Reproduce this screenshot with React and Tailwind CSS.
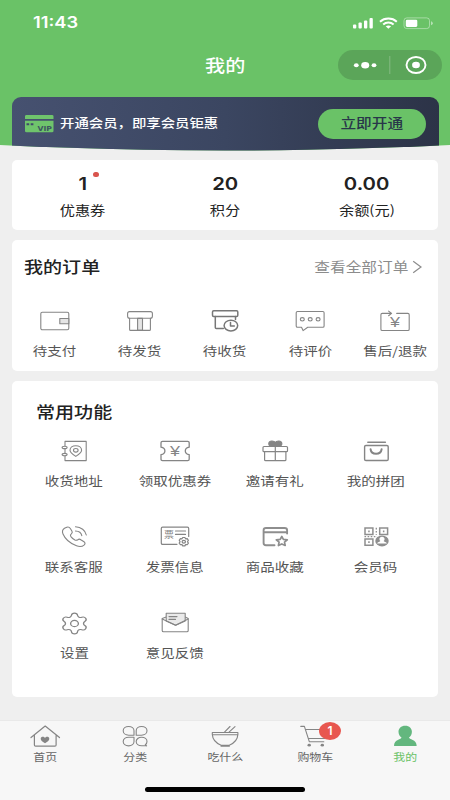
import React from "react";
import { Settings } from "lucide-react";

// Wide text: glyphs are a bit broader than they are tall
const Label = ({ children, className = "" }) => (
  <span
    className={`inline-block whitespace-nowrap scale-x-[1.17] leading-none ${className}`}
  >
    {children}
  </span>
);

// Common 36x28 canvas for all menu icons
const Icon = ({ children, color = "text-[#858585]", width = 1.1 }) => (
  <svg
    viewBox="0 0 36 28"
    className={`block h-7 w-9 shrink-0 ${color}`}
    fill="none"
    stroke="currentColor"
    strokeWidth={width}
    strokeLinecap="round"
    strokeLinejoin="round"
  >
    {children}
  </svg>
);

const Yen = ({ y = 18.8 }) => (
  <text
    x="13"
    y={y}
    fontSize="14"
    textLength="10"
    lengthAdjust="spacingAndGlyphs"
    fontFamily="Liberation Sans, sans-serif"
    fill="currentColor"
    stroke="none"
  >
    ¥
  </text>
);

const orders = [
  {
    title: "待支付",
    icon: (
      <Icon>
        <rect x="3.8" y="5.3" width="28" height="17.4" rx="1.5" />
        <path d="M31.8 11.5h-9v5.2h9z" fill="#e5e5e5" />
      </Icon>
    ),
  },
  {
    title: "待发货",
    icon: (
      <Icon>
        <path d="M15.6 11.4h4.9v12h-4.9z" fill="#e5e5e5" />
        <rect x="5.6" y="4.6" width="24.8" height="6.6" rx="2" />
        <path d="M7.6 11.2v11.2q0 1 1 1h18.8q1 0 1-1V11.2" />
      </Icon>
    ),
  },
  {
    title: "待收货",
    icon: (
      <Icon width={1.5} color="text-[#777777]">
        <rect x="5.5" y="3.8" width="25.3" height="5.6" rx="1.2" />
        <path d="M8.3 9.4v11.2q0 1 1 1h7M28.5 9.4v3.2" />
        <ellipse cx="23.9" cy="18.6" rx="6.8" ry="5.4" />
        <path d="M23.5 15.4v3.6h3.8" />
      </Icon>
    ),
  },
  {
    title: "待评价",
    icon: (
      <Icon>
        <path d="M5.5 4.5h25.3q1.3 0 1.3 1.3v13.1q0 1.3-1.3 1.3H15.7l-4.6 3.4-1.6-3.4h-4q-1.3 0-1.3-1.3V5.8q0-1.3 1.3-1.3z" />
        <ellipse cx="10.3" cy="12.3" rx="2" ry="1.7" />
        <ellipse cx="18.2" cy="12.3" rx="2" ry="1.7" />
        <ellipse cx="26.1" cy="12.3" rx="2" ry="1.7" />
      </Icon>
    ),
  },
  {
    title: "售后/退款",
    icon: (
      <Icon>
        <path d="M19.7 6.4h11.2q1.3 0 1.3 1.3v14.5q0 1.3-1.3 1.3H5.2q-1.3 0-1.3-1.3V7.7q0-1.3 1.3-1.3h9M11.6 4.1l3 2.3-3 2.3" />
        <Yen y="19.8" />
      </Icon>
    ),
  },
];

const features = [
  {
    title: "收货地址",
    icon: (
      <Icon>
        <path d="M9 9V4.4h21.2v19.2H9V19M9 12v4" />
        <ellipse cx="8.6" cy="10.4" rx="2.5" ry="1.2" />
        <ellipse cx="8.6" cy="17.6" rx="2.5" ry="1.2" />
        <path d="M19.8 19.4c-3.6-2.3-5.8-4-5.8-6.2 0-2.6 2.5-4.5 5.8-4.5s5.8 1.9 5.8 4.5c0 2.2-2.2 3.9-5.8 6.2z" />
        <ellipse cx="19.8" cy="13.3" rx="2.3" ry="1.8" />
      </Icon>
    ),
  },
  {
    title: "领取优惠券",
    icon: (
      <Icon width={1.3}>
        <path d="M5.5 4.4h25.2q1.5 0 1.5 1.3v4.5c-5.2 1-5.2 6.4 0 7.4v4.7q0 1.3-1.5 1.3H5.5q-1.5 0-1.5-1.3v-4.7c5.2-1 5.2-6.4 0-7.4V5.7q0-1.3 1.5-1.3z" />
        <Yen />
      </Icon>
    ),
  },
  {
    title: "邀请有礼",
    icon: (
      <Icon width={1.2}>
        <path
          d="M18.3 9.5h-4c-4-1.6-2.8-5.7.7-5.5 1.6.1 2.8.7 3.3 1.6.5-.9 1.7-1.5 3.3-1.6 3.5-.2 4.7 3.9.7 5.5z"
          fill="currentColor"
        />
        <rect x="6" y="9.5" width="24.5" height="5.2" rx="1" />
        <path d="M7.6 14.7v8q0 1 1 1h19.3q1 0 1-1v-8M18.3 9.5v14.2" />
      </Icon>
    ),
  },
  {
    title: "我的拼团",
    icon: (
      <Icon width={1.4}>
        <path d="M9.8 5.3h17.6" />
        <rect x="6.6" y="8.5" width="23.6" height="15" rx="1.3" />
        <path d="M12.6 12.3c.7 5.8 10.2 5.8 11 0" strokeWidth="2" />
      </Icon>
    ),
  },
  {
    title: "联系客服",
    icon: (
      <Icon>
        <path d="M8.5 5.3 10.8 4.2c1.5-.6 2.8.1 3.7 1.5l1.5 2.5c.6 1.1.3 1.9-.7 2.7-1.2.9-1.2 1.6-.4 2.7 1.1 1.4 2.5 2.5 4 3.3 1 .5 1.9.5 2.9-.2 1-.8 2-.8 3 0l3.2 2.1c1.3 1 1.3 2 .3 3-1.8 1.7-4.8 2.2-7.8 1C14 20.3 9 15.8 7 11 6 8.6 6.4 6.6 8.5 5.3z" />
        <path d="M19.5 3.8c5.5.2 10 3.5 10.8 8.2M19.5 8c3.4.1 5.8 1.9 6.3 4.7" />
      </Icon>
    ),
  },
  {
    title: "发票信息",
    icon: (
      <Icon width={1.2}>
        <path d="M20 21.3H5.6q-1.3 0-1.3-1.3V5.5q0-1.3 1.3-1.3h24.8q1.3 0 1.3 1.3v8" />
        <text
          x="7"
          y="15"
          fontSize="9"
          textLength="10"
          lengthAdjust="spacingAndGlyphs"
          fontFamily="Noto Sans CJK SC, sans-serif"
          fill="currentColor"
          stroke="none"
        >
          票
        </text>
        <path d="M18.5 8h10M18.5 11.4h10" />
        <path d="M25 15.8l.7-1.3h2.2l.7 1.3 1.6-.1 1.2 1.6-.9 1.4.9 1.4-1.2 1.6-1.6-.1-.7 1.3h-2.2l-.7-1.3-1.6.1-1.2-1.6.9-1.4-.9-1.4 1.2-1.6z" />
        <ellipse cx="26.8" cy="18.7" rx="1.7" ry="1.4" />
      </Icon>
    ),
  },
  {
    title: "商品收藏",
    icon: (
      <Icon width={1.9} color="text-[#8e8e8e]">
        <path d="M17.5 22.3H9q-2.4 0-2.4-2.2V7.3q0-2.3 2.4-2.3h18.5q2.6 0 2.6 2.3v1.9H6.6M30.1 9.2v1.4" />
        <path
          d="M24.8 13.5l1.6 2.9 3.9.4-2.8 2.3.7 3.4-3.4-1.6-3.4 1.6.7-3.4-2.8-2.3 3.9-.4z"
          strokeWidth="1.7"
        />
      </Icon>
    ),
  },
  {
    title: "会员码",
    icon: (
      <Icon width={1.5} color="text-[#8e8e8e]">
        <g strokeLinejoin="miter">
          <path d="M7 5.1h7.9v6.4H7zM21.7 5.1h7.9v6.4h-7.9zM7 15.9h7.9v6.4H7z" />
          <path d="M10.2 8.3h1.5M24.9 8.3h1.5M10.2 19.1h1.5" strokeLinecap="butt" strokeWidth="1.8" />
          <path
            d="M18.3 4.8v7M6.5 13.7h12.5"
            strokeDasharray="1.6 1.5"
            strokeLinecap="butt"
            strokeWidth="1.3"
          />
        </g>
        <ellipse cx="24" cy="17.9" rx="6.7" ry="5.5" fill="currentColor" stroke="none" />
        <path
          d="M24 13.7c1.6 0 2.6 1 2.6 2.3 0 .9-.4 1.5-1 2 .2.9 3 1 3.3 2.5h-9.8c.3-1.5 3.1-1.6 3.3-2.5-.6-.5-1-1.1-1-2 0-1.3 1-2.3 2.6-2.3z"
          fill="white"
          stroke="none"
        />
      </Icon>
    ),
  },
  {
    title: "设置",
    icon: (
      <span className="flex h-7 w-9 items-center justify-center">
        <Settings
          className="h-[25px] w-[31px] text-[#858585]"
          preserveAspectRatio="none"
          strokeWidth={1.05}
        />
      </span>
    ),
  },
  {
    title: "意见反馈",
    icon: (
      <Icon>
        <path d="M9.2 8 5.2 9.5v12q0 1.3 1.3 1.3h23.4q1.3 0 1.3-1.3v-12l-3-1.5" />
        <path d="M9.2 12V4.2h19V12L18.6 16.2z" fill="#eaeaea" />
        <path d="M5.2 10 18.6 16.3 31.2 10M12 7.6h8M12 10.4h6.5" />
      </Icon>
    ),
  },
];

const tabs = [
  {
    title: "首页",
    icon: (
      <Icon width={1.2}>
        <path d="M4 14.5 18.2 3 32.5 14.5M7.4 12v10q0 1.2 1.2 1.2h19.3q1.2 0 1.2-1.2V12" />
        <path
          d="M18 20.2c-3-1.7-4.3-3-4.3-4.5 0-2.2 3.3-2.6 4.3-.7 1-1.9 4.3-1.5 4.3.7 0 1.5-1.3 2.8-4.3 4.5z"
          fill="currentColor"
          stroke="none"
        />
      </Icon>
    ),
  },
  {
    title: "分类",
    icon: (
      <Icon>
        <path d="M17 12.2h-5.3c-3.2 0-5.5-1.9-5.5-4.4s2.3-4.3 5.4-4.3S17 5.3 17 7.8z" />
        <path d="M19.2 12.2h5.3c3.2 0 5.5-1.9 5.5-4.4s-2.3-4.3-5.4-4.3-5.4 1.8-5.4 4.3z" />
        <path d="M17 14.2h-5.3c-3.2 0-5.5 1.9-5.5 4.4s2.3 4.3 5.4 4.3S17 21.1 17 18.6z" />
        <path d="M28.6 22.8h-4c-3.1 0-5.4-1.9-5.4-4.3s2.3-4.3 5.4-4.3 5.4 1.9 5.4 4.3c0 1.4-.6 2.5-1.7 3.2l1.3 1.1" />
      </Icon>
    ),
  },
  {
    title: "吃什么",
    icon: (
      <Icon>
        <path d="M5.3 9.5h25.6v1.9c-.3 5.1-4.3 9-8.6 10.8v1.1h-8.2v-1.1C9.6 20.4 5.6 16.5 5.3 11.4zM5.3 11.7h25.6M17.5 9.2 23 3.5M22 9.2l6-5.5M14.1 22.2h8.2" />
      </Icon>
    ),
  },
  {
    title: "购物车",
    badge: 1,
    icon: (
      <Icon>
        <path d="M3.8 3.4h3.6l4.9 15.3h14.5M9 6.500h22l-3.5 9H11.3" />
        <ellipse cx="12.2" cy="22.2" rx="1.7" ry="1.4" fill="currentColor" stroke="none" />
        <ellipse cx="25.3" cy="22.2" rx="1.7" ry="1.4" fill="currentColor" stroke="none" />
      </Icon>
    ),
  },
  {
    title: "我的",
    active: true,
    icon: (
      <Icon color="text-[#63b77e]">
        <path
          d="M18.2 2.7c4.2 0 6.7 2.6 6.7 6.1 0 2.6-1.2 4.5-2.9 5.7-.3 1.8 7.7 1.7 7.7 8.6H7c0-6.9 7.8-6.8 7.5-8.6-1.7-1.2-3-3.1-3-5.7 0-3.5 2.5-6.1 6.7-6.1z"
          fill="currentColor"
          stroke="none"
        />
      </Icon>
    ),
  },
];

const StatusBar = () => (
  <div className="flex h-[45px] items-center justify-between pl-[33px] pr-[17px]">
    <span className="origin-left scale-x-[1.18] font-[Inter] text-[15.5px] font-semibold leading-none">
      11:43
    </span>
    <svg viewBox="0 0 81 14" className="h-3.5 w-[81px]" fill="white">
      <rect x="1" y="8.5" width="3.3" height="4" rx="1" />
      <rect x="6.5" y="6.5" width="3.3" height="6" rx="1" />
      <rect x="12" y="4.5" width="3.3" height="8" rx="1" />
      <rect x="17.5" y="2" width="3.3" height="10.5" rx="1" />
      <g fill="none" stroke="white" strokeWidth="2">
        <path d="M28 5.8c4.6-4.3 12.2-4.3 16.8 0" />
        <path d="M31.2 8.6c3-2.7 7.4-2.7 10.4 0" />
      </g>
      <path d="M33.7 10.3c1.6-1.2 3.8-1.2 5.4 0l-2.7 2.4z" />
      <rect x="52" y="1.9" width="25.5" height="10.7" rx="2.8" fill="none" stroke="white" strokeOpacity=".4" />
      <rect x="53.8" y="3.7" width="11.5" height="7.2" rx="1.3" />
      <path d="M79 5.3q1.8.6 1.8 2t-1.8 2z" fillOpacity=".5" />
    </svg>
  </div>
);

const TitleBar = () => (
  <div className="grid h-10 grid-cols-[1fr_auto_1fr] items-center px-2">
    <span />
    <Label className="text-[17.2px] font-medium">我的</Label>
    <div className="h-[30px] w-[104px] justify-self-end rounded-full bg-[#5ba559]">
      <svg viewBox="0 0 104 30" className="h-[30px] w-[104px]" fill="white">
        <ellipse cx="18.3" cy="15.3" rx="2.4" ry="2" />
        <ellipse cx="27.2" cy="15.2" rx="4" ry="3.2" />
        <ellipse cx="36" cy="15.3" rx="2.4" ry="2" />
        <path d="M51.8 6v18" stroke="white" strokeOpacity=".25" />
        <ellipse cx="78" cy="15" rx="9.5" ry="8" fill="none" stroke="white" strokeWidth="1.9" />
        <ellipse cx="78" cy="15" rx="3.9" ry="3.3" />
      </svg>
    </div>
  </div>
);

const VipBanner = () => (
  <div className="mx-auto mt-3 flex h-[60px] w-[427px] items-start rounded-t-[9px] bg-linear-to-r from-[#465170] via-[#3b4661] to-[#2c3347] px-[13px] pt-3">
    <svg viewBox="0 0 29 18" className="mt-1.5 h-[18px] w-[29px]">
      <path d="M1.5 0h25.5q1.5 0 1.5 1.2V4H0V1.2Q0 0 1.5 0zM0 5.8h28.5v10.3q0 1.2-1.5 1.2h-25.5Q0 17.3 0 16.1z" fill="#6fc46c" />
      <path d="M1.5 8.2h2.7v2H1.5zM5.7 8.2h2.7v2H5.7z" fill="#414b69" />
      <text x="12.5" y="15.5" fontSize="6.8" fontWeight="700" textLength="14.5" lengthAdjust="spacingAndGlyphs" fontFamily="DejaVu Sans, sans-serif" fill="#3d5560">
        VIP
      </text>
    </svg>
    <Label className="ml-1.5 mt-2 w-[138px] origin-left text-[12.3px] font-medium">
      开通会员，即享会员钜惠
    </Label>
    <button className="ml-auto flex h-[29.5px] w-[108px] items-center justify-center rounded-full bg-[#6ac267] pb-0.5 text-[#28374a]">
      <Label className="text-[13.4px] font-medium">立即开通</Label>
    </button>
  </div>
);

const Stat = ({ value, title, dot }) => (
  <div className="flex flex-col items-center pt-3.5">
    <div className="relative">
      <span className="block scale-x-[1.16] font-[Inter] text-[17.5px] font-semibold leading-[19px]">
        {value}
      </span>
      {dot && (
        <span className="absolute -right-3 -top-[2px] h-[5px] w-1.5 rounded-full bg-[#d9544d]" />
      )}
    </div>
    <Label className="mt-2.5 text-[13px]">{title}</Label>
  </div>
);

const App = () => {
  return (
    <div className="flex h-[800px] w-[450px] flex-col overflow-hidden bg-[#efefef] font-['Noto_Sans_CJK_SC',sans-serif] text-[#222222]">
      <header className="h-[151px] shrink-0 bg-[#6ac267] text-white [clip-path:ellipse(838px_150.5px_at_50%_0)]">
        <StatusBar />
        <TitleBar />
        <VipBanner />
      </header>

      <main className="flex grow flex-col gap-2.5 px-3 pt-[9px]">
        <section className="grid h-[70px] grid-cols-3 rounded-[5px] bg-white">
          <Stat value="1" title="优惠券" dot />
          <Stat value="20" title="积分" />
          <Stat value="0.00" title="余额(元)" />
        </section>

        <section className="h-[131px] rounded-[5px] bg-white">
          <div className="flex h-[54px] items-center justify-between pl-3 pr-4">
            <Label className="mb-0.5 origin-left text-[16.3px] font-medium">我的订单</Label>
            <div className="flex items-center text-[#8c8c8c]">
              <Label className="origin-right text-[13.4px]">查看全部订单</Label>
              <svg viewBox="0 0 10 14" className="ml-1 h-3.5 w-2.5" fill="none" stroke="currentColor" strokeWidth="1.2">
                <path d="M1.2 1.2 9 7l-7.8 5.8" />
              </svg>
            </div>
          </div>
          <div className="grid grid-cols-5 pt-[13px]">
            {orders.map((item) => (
              <div key={item.title} className="flex flex-col items-center text-[#555555]">
                {item.icon}
                <Label className="mt-2.5 text-[12.4px]">{item.title}</Label>
              </div>
            ))}
          </div>
        </section>

        <section className="h-[316px] rounded-[5px] bg-white px-3">
          <div className="flex h-14 items-end pb-[18px] pl-3">
            <Label className="origin-left text-[16.3px] font-medium">常用功能</Label>
          </div>
          <div className="grid auto-rows-[86px] grid-cols-4">
            {features.map((item) => (
              <div key={item.title} className="flex flex-col items-center text-[#555555]">
                {item.icon}
                <Label className="mt-2.5 text-[12.4px]">{item.title}</Label>
              </div>
            ))}
          </div>
        </section>
      </main>

      <nav className="flex h-20 shrink-0 flex-col border-t border-[#e9e9e9] bg-[#f7f7f7]">
        <div className="grid grid-cols-5 pt-0.5">
          {tabs.map((tab) => (
            <div
              key={tab.title}
              className={`flex flex-col items-center ${
                tab.active ? "text-[#6ac267]" : "text-[#666666]"
              }`}
            >
              <div className="relative">
                {tab.icon}
                {tab.badge && (
                  <span className="absolute -right-2 -top-[1px] flex h-[18px] w-[22px] items-center justify-center rounded-[50%] bg-[#e8574f] font-[Inter] text-[12px] font-semibold leading-none text-white">
                    {tab.badge}
                  </span>
                )}
              </div>
              <Label className="mt-px text-[10.2px]">{tab.title}</Label>
            </div>
          ))}
        </div>
        <div className="mx-auto mb-2 mt-auto h-[5px] w-40 rounded-full bg-black" />
      </nav>
    </div>
  );
};

export default App;
